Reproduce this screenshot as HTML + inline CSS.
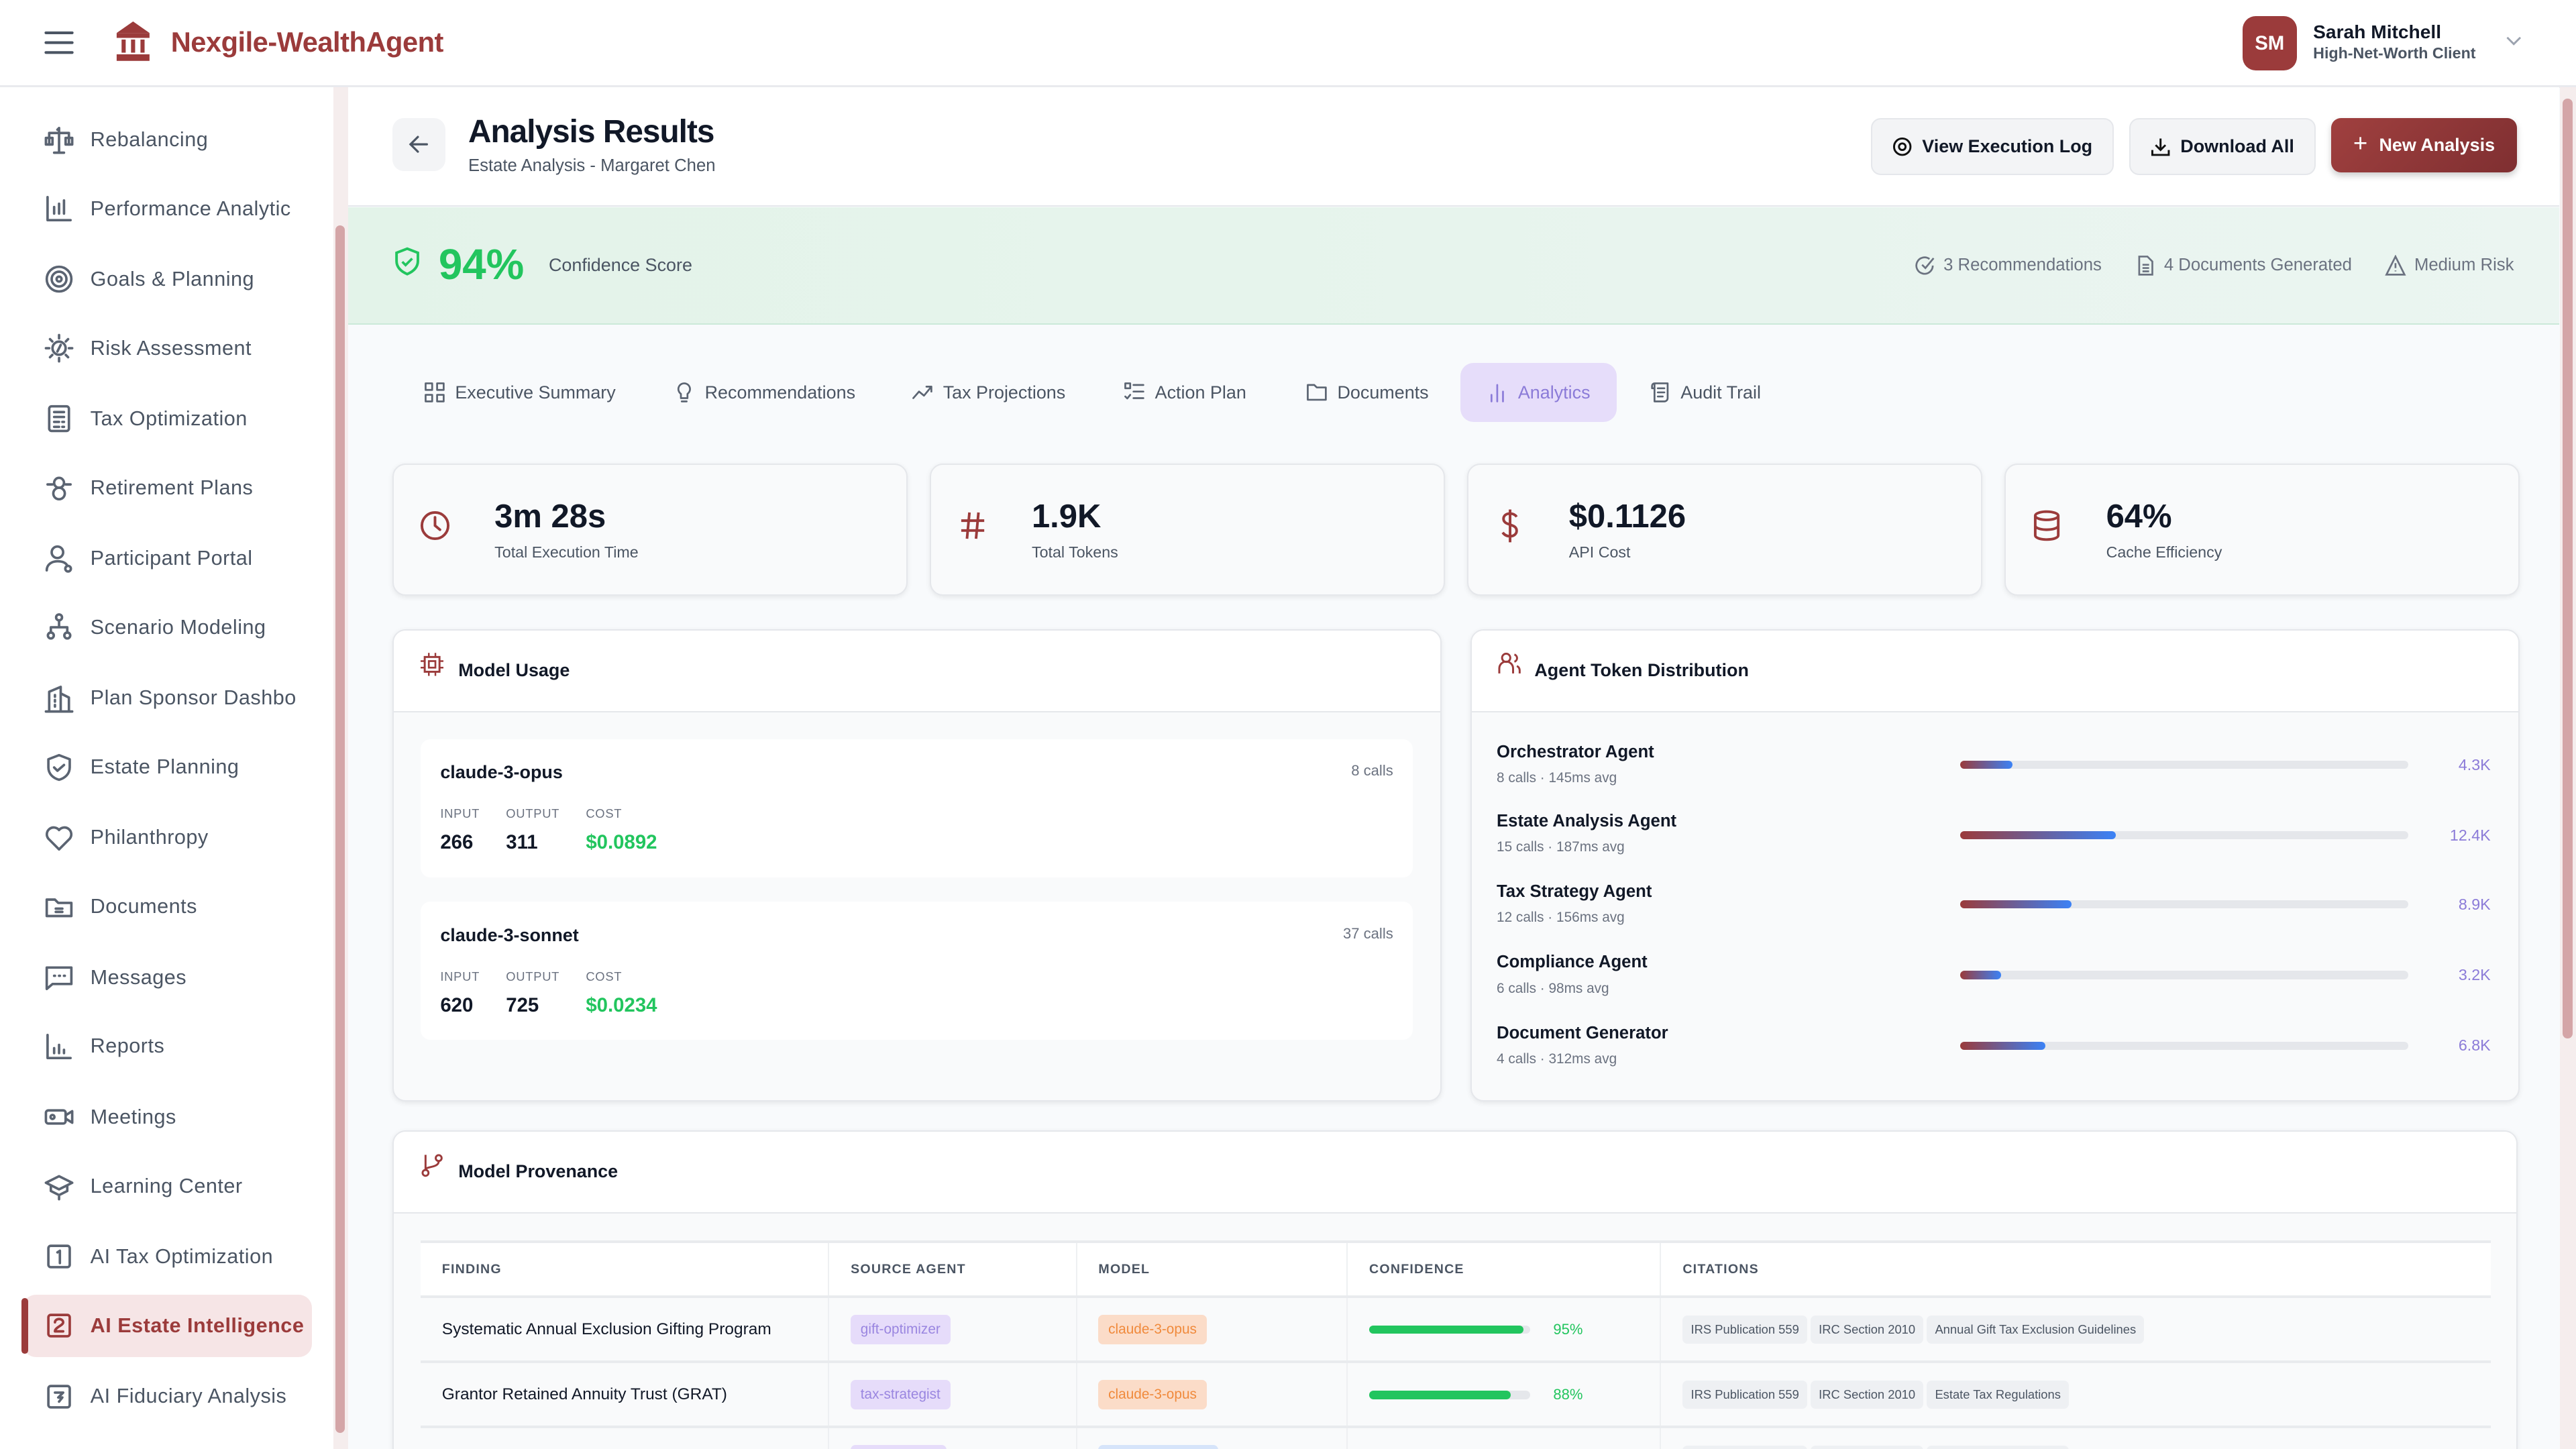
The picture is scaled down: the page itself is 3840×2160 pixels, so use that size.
<!DOCTYPE html>
<html><head><meta charset="utf-8">
<style>
html,body{margin:0;padding:0;}
html{width:3840px;height:2160px;overflow:hidden;background:#f8fafc;}
body{zoom:2.44898;width:1568px;height:882px;position:relative;overflow:hidden;font-family:"Liberation Sans",sans-serif;color:#111827;background:#f8fafc;}
.a{position:absolute;}
svg{display:block;}
.ic{fill:none;stroke:#5b6472;stroke-width:1.5;stroke-linecap:round;stroke-linejoin:round;}
.nav{position:absolute;left:27px;height:20px;display:flex;align-items:center;font-size:12.5px;color:#4b5563;letter-spacing:.2px;white-space:nowrap;}
.nav svg{width:18px;height:18px;margin-right:10px;}
.card{position:absolute;background:#f9fafb;border:1px solid #e5e7eb;border-radius:8px;box-shadow:0 1px 3px rgba(0,0,0,.08);}
.tab{position:absolute;top:221px;height:36px;display:flex;align-items:center;font-size:11px;color:#4b5563;}
.tab svg{width:13px;height:13px;margin-right:6px;}
.btn{position:absolute;top:72px;height:33px;border-radius:6px;display:flex;align-items:center;justify-content:center;font-size:11px;font-weight:bold;}
.sv{font-size:20px;font-weight:bold;color:#111827;}
.sl{font-size:9.5px;color:#4b5563;margin-top:5px;}
.lbl{font-size:7.5px;color:#6b7280;letter-spacing:.3px;}
.num{font-size:12px;font-weight:bold;margin-top:6px;}
.ag{position:absolute;left:911px;font-size:10.5px;font-weight:bold;color:#111827;}
.ag div{font-size:8.5px;font-weight:normal;color:#6b7280;margin-top:5px;}
.bar{position:absolute;left:1193px;width:273px;height:5px;border-radius:3px;background:#e5e7eb;}
.bar i{display:block;height:100%;border-radius:3px;background:linear-gradient(90deg,#9b3b3b,#3b82f6);}
.bv{position:absolute;right:52px;font-size:9.5px;color:#8b7bd8;}
th{font-size:8px;font-weight:bold;color:#4b5563;letter-spacing:.5px;text-align:left;padding:0 13px;height:32px;background:#fff;border-right:1px solid #eef0f2;border-bottom:2px solid #e9ebee;}
td{font-size:10px;padding:0 13px;height:38px;border-right:1px solid #eef0f2;border-bottom:2px solid #e9ebee;background:#f9fafb;}
.pill{display:inline-block;font-size:8.5px;padding:4px 6px;border-radius:3px;}
.cit{display:inline-block;font-size:7.5px;color:#4b5563;background:#eef0f3;padding:4px 5px;border-radius:3px;margin-right:2px;}
.cb{display:inline-block;width:98px;height:5px;border-radius:3px;background:#e5e7eb;vertical-align:middle;margin-right:14px;}
.cb i{display:block;height:100%;background:#22c55e;border-radius:3px;}
</style></head><body>

<div class="a" style="left:0;top:0;width:1568px;height:52px;background:#fff;border-bottom:2px solid #e9eaee;"></div>
<svg class="a" style="left:27px;top:18px" width="18" height="16" viewBox="0 0 18 16"><path d="M1 2h16M1 8h16M1 14h16" stroke="#4b5563" stroke-width="1.7" stroke-linecap="round"/></svg>
<svg class="a" style="left:69px;top:13px" width="24" height="25" viewBox="0 0 24 25"><path d="M12 0L2 7h20z" fill="#9b3b3b"/><rect x="2" y="7" width="20" height="3" fill="#9b3b3b"/><rect x="5" y="11" width="2.5" height="8" fill="#9b3b3b"/><rect x="10.75" y="11" width="2.5" height="8" fill="#9b3b3b"/><rect x="16.5" y="11" width="2.5" height="8" fill="#9b3b3b"/><rect x="2" y="20" width="20" height="4" fill="#9b3b3b"/></svg>
<div class="a" style="left:104px;top:16px;font-size:17px;font-weight:bold;color:#9b3b3b;letter-spacing:-.2px;">Nexgile-WealthAgent</div>
<div class="a" style="left:1365px;top:10px;width:33px;height:33px;border-radius:8px;background:#9b3b3b;color:#fff;font-size:12px;font-weight:bold;display:flex;align-items:center;justify-content:center;">SM</div>
<div class="a" style="left:1408px;top:13px;font-size:11.5px;font-weight:bold;">Sarah Mitchell</div>
<div class="a" style="left:1408px;top:27px;font-size:9.5px;color:#4b5563;font-weight:bold;">High-Net-Worth Client</div>
<svg class="a" style="left:1525px;top:21px" width="10" height="8" viewBox="0 0 10 8"><path d="M1 2l4 4 4-4" fill="none" stroke="#9ca3af" stroke-width="1.2"/></svg>

<div class="a" style="left:0;top:53px;width:203px;height:829px;background:#fff;"></div>
<div class="a" style="left:203px;top:53px;width:9px;height:829px;background:#f5eded;"></div>
<div class="a" style="left:204px;top:137px;width:6px;height:735px;border-radius:3px;background:#d4a5a7;"></div>
<div class="a" style="left:14px;top:788px;width:176px;height:38px;border-radius:8px;background:#f6e5e6;"></div>
<div class="a" style="left:13px;top:790px;width:4px;height:34px;border-radius:2px;background:#9b3b3b;"></div>

<div class="nav" style="top:75px"><svg viewBox="0 0 18 18" class="ic"><path d="M9 2v15M6 17h6M3 5h12M9 2l-1 1M3 5v7M15 5v7"/><rect x="1" y="8" width="4" height="4"/><rect x="13" y="8" width="4" height="4"/></svg>Rebalancing</div>
<div class="nav" style="top:117px"><svg viewBox="0 0 18 18" class="ic"><path d="M2 2v14h14M6 12V8M9 12V6M12 12V4"/></svg>Performance Analytic</div>
<div class="nav" style="top:160px"><svg viewBox="0 0 18 18" class="ic"><circle cx="9" cy="9" r="7.5"/><circle cx="9" cy="9" r="4.5"/><circle cx="9" cy="9" r="1.5"/></svg>Goals &amp; Planning</div>
<div class="nav" style="top:202px"><svg viewBox="0 0 18 18" class="ic"><circle cx="9" cy="9" r="4"/><path d="M9 1v2M9 15v2M1 9h2M15 9h2M3.5 3.5l1.4 1.4M13.1 13.1l1.4 1.4M3.5 14.5l1.4-1.4M13.1 4.9l1.4-1.4M8 11l2-4"/></svg>Risk Assessment</div>
<div class="nav" style="top:245px"><svg viewBox="0 0 18 18" class="ic"><rect x="3" y="1.5" width="12" height="15" rx="1.5"/><path d="M6 5h6M6 8h6M6 11h3M11 11h1M6 14h3M11 14h1"/></svg>Tax Optimization</div>
<div class="nav" style="top:287px"><svg viewBox="0 0 18 18" class="ic"><circle cx="9" cy="6" r="3"/><circle cx="9" cy="12.5" r="3.5"/><path d="M2 7h3M13 7h3"/></svg>Retirement Plans</div>
<div class="nav" style="top:330px"><svg viewBox="0 0 18 18" class="ic"><circle cx="8" cy="5" r="3.5"/><path d="M1.5 16c0-3.5 3-5.5 6.5-5.5s5 1 6 2.5"/><circle cx="14.5" cy="15" r="1.7"/></svg>Participant Portal</div>
<div class="nav" style="top:372px"><svg viewBox="0 0 18 18" class="ic"><circle cx="9" cy="3" r="1.8"/><circle cx="4" cy="14" r="1.8"/><circle cx="14" cy="14" r="1.8"/><path d="M9 5v4M4 12V9h10v3"/></svg>Scenario Modeling</div>
<div class="nav" style="top:415px"><svg viewBox="0 0 18 18" class="ic"><path d="M1 17h16M3 17V5l7-3v15M10 6l5 2.5V17M6.5 7v1M6.5 10v1M6.5 13v1"/></svg>Plan Sponsor Dashbo</div>
<div class="nav" style="top:457px"><svg viewBox="0 0 18 18" class="ic"><path d="M9 1.5l6.5 2.5v5c0 4-3 6.5-6.5 7.5-3.5-1-6.5-3.5-6.5-7.5V4z"/><path d="M6 9l2 2 4-3.5"/></svg>Estate Planning</div>
<div class="nav" style="top:500px"><svg viewBox="0 0 18 18" class="ic"><path d="M9 16L2.5 9.5A3.8 3.8 0 0 1 9 4.2a3.8 3.8 0 0 1 6.5 5.3z"/></svg>Philanthropy</div>
<div class="nav" style="top:542px"><svg viewBox="0 0 18 18" class="ic"><path d="M1.5 4.5v10h15v-8h-8l-2-2z"/><path d="M7 10h4M7 12h4"/></svg>Documents</div>
<div class="nav" style="top:585px"><svg viewBox="0 0 18 18" class="ic"><path d="M1.5 3h15v10H5l-3.5 3z"/><path d="M6 8h.5M9 8h.5M12 8h.5"/></svg>Messages</div>
<div class="nav" style="top:627px"><svg viewBox="0 0 18 18" class="ic"><path d="M2 2v14h14M6 13v-3M9 13V8M12 13v-2"/></svg>Reports</div>
<div class="nav" style="top:670px"><svg viewBox="0 0 18 18" class="ic"><rect x="1" y="5" width="12" height="8" rx="1.5"/><circle cx="5" cy="9" r="1.2"/><path d="M13 8l4-2.5v7L13 10"/></svg>Meetings</div>
<div class="nav" style="top:712px"><svg viewBox="0 0 18 18" class="ic"><path d="M9 3L1 7l8 4 8-4zM4 8.5V12l5 2.5 5-2.5V8.5M9 14.5V17"/></svg>Learning Center</div>
<div class="nav" style="top:755px"><svg viewBox="0 0 18 18" class="ic"><rect x="2.5" y="2.5" width="13" height="13" rx="1.5"/><path d="M8 6.5l1.5-1V13"/></svg>AI Tax Optimization</div>
<div class="nav" style="top:797px;color:#9b3b3b;font-weight:bold;"><svg viewBox="0 0 18 18" class="ic" style="stroke:#9b3b3b"><rect x="2.5" y="2.5" width="13" height="13" rx="1.5"/><path d="M6.5 7a2.5 2 0 0 1 5 0c0 2-5 3-5 5.5h5"/></svg>AI Estate Intelligence</div>
<div class="nav" style="top:840px"><svg viewBox="0 0 18 18" class="ic"><rect x="2.5" y="2.5" width="13" height="13" rx="1.5"/><path d="M6.5 6.5h5l-3 3h2.5l-2 2.5"/></svg>AI Fiduciary Analysis</div>

<div class="a" style="left:1558px;top:53px;width:10px;height:829px;background:#f5eded;"></div>
<div class="a" style="left:1560px;top:60px;width:6px;height:572px;border-radius:3px;background:#d4a5a7;"></div>

<div class="a" style="left:212px;top:53px;width:1346px;height:72px;background:#fff;border-bottom:1px solid #e5e7eb;"></div>
<div class="a" style="left:239px;top:72px;width:32px;height:32px;border-radius:7px;background:#f3f4f6;"></div>
<svg class="a" style="left:248px;top:81px" width="14" height="14" viewBox="0 0 14 14"><path d="M12 7H2M6.5 2.5L2 7l4.5 4.5" fill="none" stroke="#4b5563" stroke-width="1.3" stroke-linecap="round"/></svg>
<div class="a" style="left:285px;top:69px;font-size:19.5px;font-weight:bold;letter-spacing:-.4px;">Analysis Results</div>
<div class="a" style="left:285px;top:95px;font-size:10.5px;color:#4b5563;">Estate Analysis - Margaret Chen</div>
<div class="btn" style="left:1139px;width:146px;background:#f3f4f6;border:1px solid #e5e7eb;"><svg width="12" height="12" viewBox="0 0 12 12" style="margin-right:6px"><circle cx="6" cy="6" r="5" fill="none" stroke="#111" stroke-width="1.2"/><circle cx="6" cy="6" r="2" fill="none" stroke="#111" stroke-width="1.2"/></svg>View Execution Log</div>
<div class="btn" style="left:1296px;width:112px;background:#f3f4f6;border:1px solid #e5e7eb;"><svg width="12" height="12" viewBox="0 0 12 12" style="margin-right:6px"><path d="M6 1v7M3 5l3 3 3-3M1 8v3h10V8" fill="none" stroke="#111" stroke-width="1.2"/></svg>Download All</div>
<div class="btn" style="left:1419px;width:113px;background:linear-gradient(135deg,#a0403f,#7f2f31);color:#fff;box-shadow:0 2px 4px rgba(0,0,0,.2);"><span style="font-size:15px;font-weight:normal;margin-right:7px;margin-top:-2px">+</span>New Analysis</div>

<div class="a" style="left:212px;top:126px;width:1346px;height:71px;background:linear-gradient(90deg,#e3f3e9,#ebf5f1);border-bottom:1px solid #cbe9d9;"></div>
<svg class="a" style="left:239px;top:150px" width="18" height="19" viewBox="0 0 18 19"><path d="M9 1.5l6.5 2.5v5c0 4-3 6.5-6.5 8-3.5-1.5-6.5-4-6.5-8V4z" fill="none" stroke="#22c55e" stroke-width="1.6"/><path d="M6 9.5l2 2 4-4" fill="none" stroke="#22c55e" stroke-width="1.5"/></svg>
<div class="a" style="left:267px;top:146px;font-size:26px;font-weight:bold;color:#22c55e;">94%</div>
<div class="a" style="left:334px;top:155px;font-size:11px;color:#4b5563;">Confidence Score</div>
<div class="a" style="left:1165px;top:155px;font-size:10.5px;color:#6b7280;display:flex;align-items:center;white-space:nowrap;">
<svg width="13" height="13" viewBox="0 0 13 13" style="margin-right:5px"><path d="M11.5 6.5a5 5 0 1 1-2-4M5 6l2 2 5-6" fill="none" stroke="#6b7280" stroke-width="1.1"/></svg>3 Recommendations
<svg width="12" height="13" viewBox="0 0 12 13" style="margin:0 5px 0 21px"><path d="M2 1h5l3 3v8H2zM4 6h4M4 8h4M4 10h4" fill="none" stroke="#6b7280" stroke-width="1.1"/></svg>4 Documents Generated
<svg width="13" height="13" viewBox="0 0 13 13" style="margin:0 5px 0 20px"><path d="M6.5 1L12 12H1zM6.5 5v3M6.5 9.5v.5" fill="none" stroke="#6b7280" stroke-width="1.1"/></svg>Medium Risk</div>

<div class="tab" style="left:258px"><svg viewBox="0 0 13 13" class="ic" style="stroke-width:1.1"><rect x="1" y="1" width="4" height="4"/><rect x="8" y="1" width="4" height="4"/><rect x="1" y="8" width="4" height="4"/><rect x="8" y="8" width="4" height="4"/></svg>Executive Summary</div>
<div class="tab" style="left:410px"><svg viewBox="0 0 13 13" class="ic" style="stroke-width:1.1"><path d="M6.5 1a3.5 3.5 0 0 0-2 6.4V10h4V7.4A3.5 3.5 0 0 0 6.5 1zM5 12h3"/></svg>Recommendations</div>
<div class="tab" style="left:555px"><svg viewBox="0 0 13 13" class="ic" style="stroke-width:1.1"><path d="M1 10l3.5-4 3 2.5L12 3M9 3h3v3"/></svg>Tax Projections</div>
<div class="tab" style="left:684px"><svg viewBox="0 0 13 13" class="ic" style="stroke-width:1.1"><rect x="1" y="1" width="3" height="3"/><path d="M6 2h6M6 6h6M6 10h6M1 9l1.2 1.2L4 8"/></svg>Action Plan</div>
<div class="tab" style="left:795px"><svg viewBox="0 0 13 13" class="ic" style="stroke-width:1.1"><path d="M1 2h4l1.5 1.5H12V11H1z"/></svg>Documents</div>
<div class="a" style="left:889px;top:221px;width:95px;height:36px;border-radius:8px;background:#e6ddfa;"></div>
<div class="tab" style="left:905px;color:#8b7bd8"><svg viewBox="0 0 13 13" class="ic" style="stroke:#8b7bd8;stroke-width:1.1"><path d="M3 12V8M6.5 12V2M10 12V6"/></svg>Analytics</div>
<div class="tab" style="left:1004px"><svg viewBox="0 0 13 13" class="ic" style="stroke-width:1.1"><path d="M3 1h8v9a2 2 0 0 1-2 2H3zM3 1a1.5 1.5 0 0 0-1.5 1.5V4H3M5 4h4M5 6.5h4M5 9h3"/></svg>Audit Trail</div>

<div class="card" style="left:239px;top:282px;width:312px;height:79px;"></div>
<div class="card" style="left:566px;top:282px;width:312px;height:79px;"></div>
<div class="card" style="left:893px;top:282px;width:312px;height:79px;"></div>
<div class="card" style="left:1220px;top:282px;width:312px;height:79px;"></div>
<svg class="a" style="left:255px;top:310px" width="20" height="20" viewBox="0 0 20 20"><circle cx="10" cy="10" r="8" fill="none" stroke="#9b3b3b" stroke-width="1.6"/><path d="M10 5v5l3 2.5" fill="none" stroke="#9b3b3b" stroke-width="1.6" stroke-linecap="round"/></svg>
<svg class="a" style="left:583px;top:310px" width="18" height="20" viewBox="0 0 18 20"><path d="M7 2L5.5 18M12.5 2L11 18M2 7h14M2 13h14" stroke="#9b3b3b" stroke-width="1.6"/></svg>
<svg class="a" style="left:910px;top:309px" width="18" height="22" viewBox="0 0 18 22"><path d="M9 1v20M13 5.5c-1-1.5-2.5-2-4-2-2.5 0-4 1.3-4 3.2 0 4.5 8 2.5 8 7.3 0 2-1.8 3.3-4 3.3-2 0-3.5-.8-4.5-2.3" fill="none" stroke="#9b3b3b" stroke-width="1.6"/></svg>
<svg class="a" style="left:1237px;top:310px" width="18" height="20" viewBox="0 0 18 20"><ellipse cx="9" cy="4" rx="7" ry="2.5" fill="none" stroke="#9b3b3b" stroke-width="1.6"/><path d="M2 4v12c0 1.4 3 2.5 7 2.5s7-1.1 7-2.5V4M2 10c0 1.4 3 2.5 7 2.5s7-1.1 7-2.5" fill="none" stroke="#9b3b3b" stroke-width="1.6"/></svg>
<div class="a" style="left:301px;top:303px"><div class="sv">3m 28s</div><div class="sl">Total Execution Time</div></div>
<div class="a" style="left:628px;top:303px"><div class="sv">1.9K</div><div class="sl">Total Tokens</div></div>
<div class="a" style="left:955px;top:303px"><div class="sv">$0.1126</div><div class="sl">API Cost</div></div>
<div class="a" style="left:1282px;top:303px"><div class="sv">64%</div><div class="sl">Cache Efficiency</div></div>

<div class="card" style="left:239px;top:383px;width:637px;height:286px;overflow:hidden;"><div style="height:49px;background:#fff;border-bottom:1px solid #e5e7eb;"></div></div>
<svg class="a" style="left:256px;top:397px" width="14" height="15" viewBox="0 0 14 15"><rect x="2.5" y="3" width="9" height="9" fill="none" stroke="#9b3b3b" stroke-width="1.2"/><rect x="5" y="5.5" width="4" height="4" fill="none" stroke="#9b3b3b" stroke-width="1.1"/><path d="M5 0.5v2.5M9 0.5v2.5M5 12v2.5M9 12v2.5M0 5.5h2.5M0 9.5h2.5M11.5 5.5H14M11.5 9.5H14" stroke="#9b3b3b" stroke-width="1"/></svg>
<div class="a" style="left:279px;top:402px;font-size:11px;font-weight:bold;">Model Usage</div>
<div class="a" style="left:256px;top:450px;width:604px;height:84px;background:#fff;border-radius:6px;"></div>
<div class="a" style="left:256px;top:549px;width:604px;height:84px;background:#fff;border-radius:6px;"></div>
<div class="a" style="left:268px;top:464px;font-size:11px;font-weight:bold;">claude-3-opus</div>
<div class="a" style="right:720px;top:464px;font-size:9px;color:#6b7280;">8 calls</div>
<div class="a" style="left:268px;top:491px;display:flex;gap:16px;">
<div><div class="lbl">INPUT</div><div class="num">266</div></div>
<div><div class="lbl">OUTPUT</div><div class="num">311</div></div>
<div><div class="lbl">COST</div><div class="num" style="color:#22c55e">$0.0892</div></div></div>
<div class="a" style="left:268px;top:563px;font-size:11px;font-weight:bold;">claude-3-sonnet</div>
<div class="a" style="right:720px;top:563px;font-size:9px;color:#6b7280;">37 calls</div>
<div class="a" style="left:268px;top:590px;display:flex;gap:16px;">
<div><div class="lbl">INPUT</div><div class="num">620</div></div>
<div><div class="lbl">OUTPUT</div><div class="num">725</div></div>
<div><div class="lbl">COST</div><div class="num" style="color:#22c55e">$0.0234</div></div></div>

<div class="card" style="left:895px;top:383px;width:637px;height:286px;overflow:hidden;"><div style="height:49px;background:#fff;border-bottom:1px solid #e5e7eb;"></div></div>
<svg class="a" style="left:912px;top:397px" width="14" height="14" viewBox="0 0 14 14"><circle cx="5" cy="3.5" r="2.5" fill="none" stroke="#9b3b3b" stroke-width="1.2"/><path d="M0.8 13V10a4 4 0 0 1 8.4 0v3M10 1.5a2.3 2.3 0 0 1 0 4.4M11.5 8.5a3 3 0 0 1 1.7 2.7V13" fill="none" stroke="#9b3b3b" stroke-width="1.2"/></svg>
<div class="a" style="left:934px;top:402px;font-size:11px;font-weight:bold;">Agent Token Distribution</div>
<div class="ag" style="top:452px">Orchestrator Agent<div>8 calls · 145ms avg</div></div>
<div class="ag" style="top:494px">Estate Analysis Agent<div>15 calls · 187ms avg</div></div>
<div class="ag" style="top:537px">Tax Strategy Agent<div>12 calls · 156ms avg</div></div>
<div class="ag" style="top:580px">Compliance Agent<div>6 calls · 98ms avg</div></div>
<div class="ag" style="top:623px">Document Generator<div>4 calls · 312ms avg</div></div>
<div class="bar" style="top:463px"><i style="width:32px"></i></div>
<div class="bar" style="top:506px"><i style="width:95px"></i></div>
<div class="bar" style="top:548px"><i style="width:68px"></i></div>
<div class="bar" style="top:591px"><i style="width:25px"></i></div>
<div class="bar" style="top:634px"><i style="width:52px"></i></div>
<div class="bv" style="top:460px">4.3K</div>
<div class="bv" style="top:503px">12.4K</div>
<div class="bv" style="top:545px">8.9K</div>
<div class="bv" style="top:588px">3.2K</div>
<div class="bv" style="top:631px">6.8K</div>

<div class="card" style="left:239px;top:688px;width:1292px;height:220px;overflow:hidden;"><div style="height:49px;background:#fff;border-bottom:1px solid #e5e7eb;"></div></div>
<svg class="a" style="left:256px;top:702px" width="14" height="15" viewBox="0 0 14 15"><circle cx="3" cy="12" r="1.8" fill="none" stroke="#9b3b3b" stroke-width="1.2"/><circle cx="11" cy="3" r="1.8" fill="none" stroke="#9b3b3b" stroke-width="1.2"/><path d="M3 10V1M11 5c0 4-8 3-8 5" fill="none" stroke="#9b3b3b" stroke-width="1.2"/></svg>
<div class="a" style="left:279px;top:707px;font-size:11px;font-weight:bold;">Model Provenance</div>
<table class="a" style="left:256px;top:755px;width:1260px;border-collapse:collapse;border-top:2px solid #e9ebee;">
<tr><th style="width:222px">FINDING</th><th style="width:124px">SOURCE AGENT</th><th style="width:138px">MODEL</th><th style="width:164px">CONFIDENCE</th><th style="border-right:none">CITATIONS</th></tr>
<tr><td>Systematic Annual Exclusion Gifting Program</td><td><span class="pill" style="background:#e6dcfa;color:#9a86e0">gift-optimizer</span></td><td><span class="pill" style="background:#fbdcc8;color:#f08a3c">claude-3-opus</span></td><td><span class="cb"><i style="width:94px"></i></span><span style="font-size:9px;color:#22c55e">95%</span></td><td style="border-right:none"><span class="cit">IRS Publication 559</span><span class="cit">IRC Section 2010</span><span class="cit">Annual Gift Tax Exclusion Guidelines</span></td></tr>
<tr><td>Grantor Retained Annuity Trust (GRAT)</td><td><span class="pill" style="background:#e6dcfa;color:#9a86e0">tax-strategist</span></td><td><span class="pill" style="background:#fbdcc8;color:#f08a3c">claude-3-opus</span></td><td><span class="cb"><i style="width:86px"></i></span><span style="font-size:9px;color:#22c55e">88%</span></td><td style="border-right:none"><span class="cit">IRS Publication 559</span><span class="cit">IRC Section 2010</span><span class="cit">Estate Tax Regulations</span></td></tr>
<tr><td></td><td><span class="pill" style="background:#e6dcfa;color:#e6dcfa">tax-strategis</span></td><td><span class="pill" style="background:#d6e4fa;color:#d6e4fa">claude-3-sonnet</span></td><td></td><td style="border-right:none"><span class="cit">IRS Publication 559</span><span class="cit">IRC Section 2010</span><span class="cit">Estate Tax Regulations</span></td></tr>
</table>
</body></html>
